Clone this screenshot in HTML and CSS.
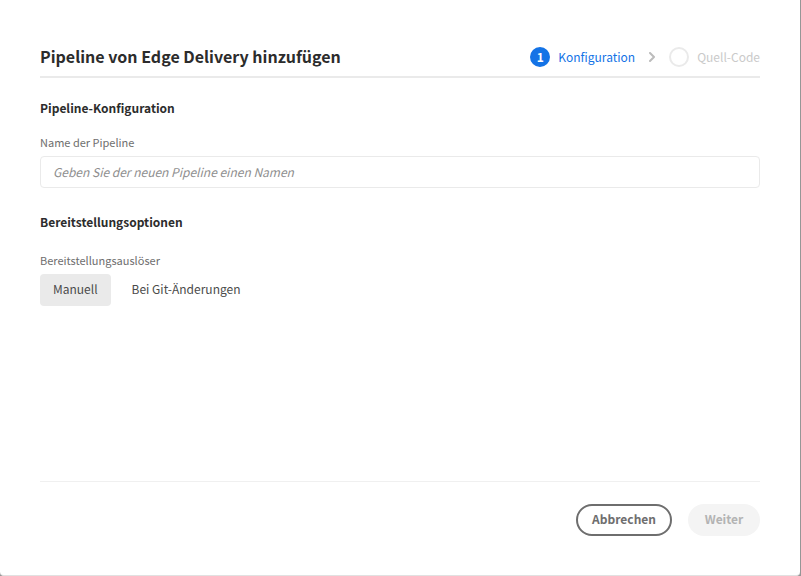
FILE: index.html
```html
<!DOCTYPE html>
<html lang="de">
<head>
<meta charset="utf-8">
<meta name="viewport" content="width=device-width, initial-scale=1">
<title>Pipeline von Edge Delivery hinzufügen</title>
<link rel="stylesheet" href="styles.css">
</head>
<body>
<main class="dialog">
  <header class="header">
    <h1 class="title">Pipeline von Edge Delivery hinzufügen</h1>
    <ol class="steps">
      <li class="step step-current" aria-current="step"><span class="marker">1</span>Konfiguration</li>
      <li class="step step-next">
        <svg class="chevron" viewBox="0 0 8 10" aria-hidden="true"><path d="M2 1l4 4-4 4"/></svg>
        <span class="marker"></span>Quell-Code
      </li>
    </ol>
  </header>
  <form class="form">
    <section class="section">
      <h2 class="heading">Pipeline-Konfiguration</h2>
      <label class="label" for="name">Name der Pipeline</label>
      <input class="input" id="name" type="text" placeholder="Geben Sie der neuen Pipeline einen Namen">
    </section>
    <section class="section">
      <h2 class="heading">Bereitstellungsoptionen</h2>
      <div class="group" role="group" aria-labelledby="trigger">
        <span class="label" id="trigger">Bereitstellungsauslöser</span>
        <div class="options">
          <button class="option selected" type="button" aria-pressed="true">Manuell</button>
          <button class="option" type="button" aria-pressed="false">Bei Git-Änderungen</button>
        </div>
      </div>
    </section>
    <footer class="footer">
      <button class="button secondary" type="button">Abbrechen</button>
      <button class="button" type="submit" disabled>Weiter</button>
    </footer>
  </form>
</main>
</body>
</html>
```
FILE: styles.css
```css
* {
  box-sizing: border-box;
}

body {
  margin: 0;
  background: #969696;
  color: #2c2c2c;
  font: 12px/20px "Noto Sans CJK SC", "Noto Sans", sans-serif;
}

button,
input {
  font: inherit;
}

.dialog {
  display: flex;
  flex-direction: column;
  min-height: 100vh;
  margin-right: 1px;
  padding: 40px;
  padding-bottom: 39px;
  background: #fff;
  border-bottom: 1px solid #e1e1e1;
  border-radius: 0 0 4px 4px;
}

.header {
  display: flex;
  align-items: center;
  justify-content: space-between;
  height: 38px;
  padding-bottom: 3px;
  border-bottom: 2px solid #eaeaea;
}

.title {
  margin: 0;
  padding-bottom: 2px;
  font-size: 16px;
  line-height: 24px;
  font-weight: 700;
}

.steps {
  display: flex;
  margin: 0;
  padding: 0;
  list-style: none;
}

.step {
  display: flex;
  align-items: center;
  gap: 8px;
}

.step-current {
  color: #1473e6;
}

.step-next {
  color: #cacaca;
}

.marker {
  display: grid;
  place-items: center;
  width: 20px;
  height: 20px;
  border: 2px solid #eaeaea;
  border-radius: 50%;
  font-weight: 700;
  line-height: 16px;
}

.step-current .marker {
  border-color: #1473e6;
  background: #1473e6;
  color: #fff;
}

.chevron {
  width: 8px;
  height: 10px;
  margin: 0 5px 0 13px;
  fill: none;
  stroke: #bcbcbc;
  stroke-width: 2;
  stroke-linecap: round;
  stroke-linejoin: round;
}

.form {
  display: flex;
  flex: 1;
  flex-direction: column;
}

.section {
  padding-top: 20px;
}

.section + .section {
  padding-top: 24px;
}

.heading {
  margin: 0 0 16px;
  font-size: 12px;
  line-height: 20px;
  font-weight: 700;
}

.label {
  display: block;
  color: #6e6e6e;
  font-size: 11px;
  line-height: 16px;
  padding-bottom: 6px;
}

.input {
  display: block;
  width: 100%;
  height: 32px;
  padding: 0 12px 2px;
  border: 1px solid #eaeaea;
  border-radius: 4px;
  background: #fff;
  color: #4b4b4b;
}

.input::placeholder {
  color: #8e8e8e;
  font-style: italic;
  opacity: 1;
}

.group {
  padding-top: 4px;
}

.options {
  display: flex;
  gap: 8px;
}

.option {
  height: 32px;
  padding: 0 13px 2px;
  border: 0;
  border-radius: 4px;
  background: transparent;
  color: #4b4b4b;
}

.selected {
  background: #eaeaea;
}

.footer {
  display: flex;
  justify-content: flex-end;
  gap: 16px;
  margin-top: auto;
  padding-top: 22px;
  border-top: 1px solid #f0f0f0;
}

.button {
  min-width: 72px;
  height: 32px;
  padding: 0 14px 2px;
  border: 2px solid #f4f4f4;
  border-radius: 16px;
  background: #f4f4f4;
  color: #b3b3b3;
  font-weight: 700;
  line-height: 20px;
}

.secondary {
  border-color: #6e6e6e;
  background: #fff;
  color: #6e6e6e;
}
```
